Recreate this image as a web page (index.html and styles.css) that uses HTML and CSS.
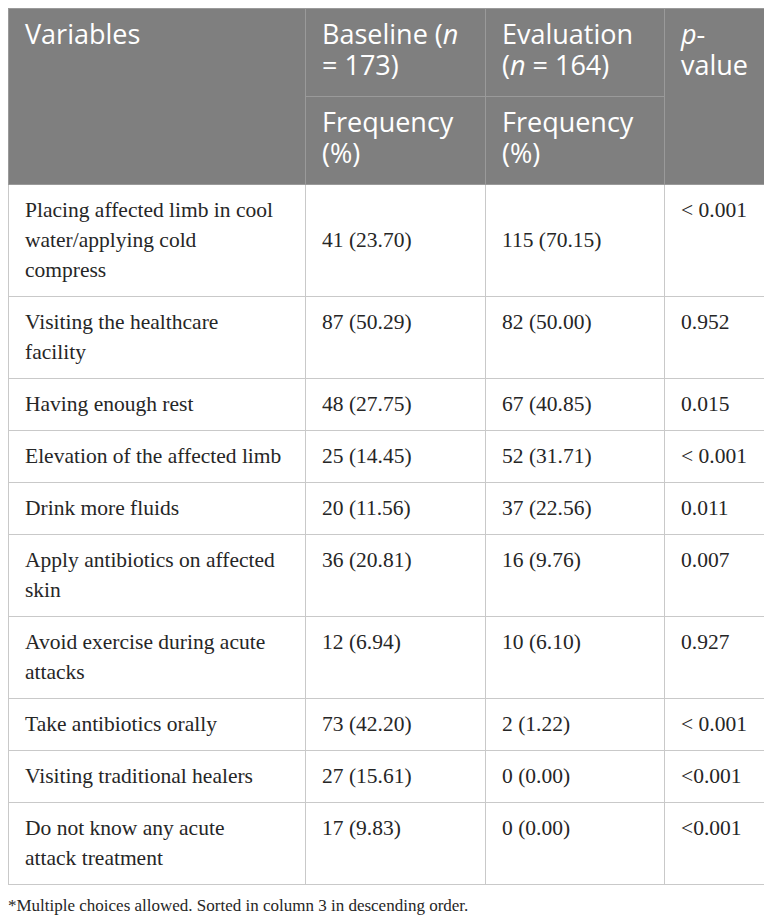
FILE: index.html
```html
<!DOCTYPE html>
<html>
<head>
<meta charset="utf-8">
<link rel="stylesheet" href="styles.css">
</head>
<body>
<table class="data">
  <colgroup>
    <col class="c1"><col class="c2"><col class="c3"><col class="c4">
  </colgroup>
  <thead>
    <tr>
      <th rowspan="2">Variables</th>
      <th>Baseline (<i>n</i> = 173)</th>
      <th>Evaluation (<i>n</i> = 164)</th>
      <th rowspan="2"><i>p</i>-value</th>
    </tr>
    <tr>
      <th>Frequency (%)</th>
      <th>Frequency (%)</th>
    </tr>
  </thead>
  <tbody>
    <tr><td>Placing affected limb in cool<br>water/applying cold<br>compress</td><td class="mid">41 (23.70)</td><td class="mid">115 (70.15)</td><td>&lt; 0.001</td></tr>
    <tr><td>Visiting the healthcare<br>facility</td><td>87 (50.29)</td><td>82 (50.00)</td><td>0.952</td></tr>
    <tr><td>Having enough rest</td><td>48 (27.75)</td><td>67 (40.85)</td><td>0.015</td></tr>
    <tr><td>Elevation of the affected limb</td><td>25 (14.45)</td><td>52 (31.71)</td><td>&lt; 0.001</td></tr>
    <tr><td>Drink more fluids</td><td>20 (11.56)</td><td>37 (22.56)</td><td>0.011</td></tr>
    <tr><td>Apply antibiotics on affected<br>skin</td><td>36 (20.81)</td><td>16 (9.76)</td><td>0.007</td></tr>
    <tr><td>Avoid exercise during acute<br>attacks</td><td>12 (6.94)</td><td>10 (6.10)</td><td>0.927</td></tr>
    <tr><td>Take antibiotics orally</td><td>73 (42.20)</td><td>2 (1.22)</td><td>&lt; 0.001</td></tr>
    <tr><td>Visiting traditional healers</td><td>27 (15.61)</td><td>0 (0.00)</td><td>&lt;0.001</td></tr>
    <tr><td>Do not know any acute<br>attack treatment</td><td>17 (9.83)</td><td>0 (0.00)</td><td>&lt;0.001</td></tr>
  </tbody>
</table>
<p class="note">*Multiple choices allowed. Sorted in column 3 in descending order.</p>
</body>
</html>
```
FILE: styles.css
```css
body {
  margin: 8px;
  background: #ffffff;
}
.data {
  width: 757px;
  table-layout: fixed;
  border-collapse: collapse;
  border: 1px solid #c9c9c9;
}
.c1 { width: 297px; }
.c2 { width: 180px; }
.c3 { width: 179px; }
.c4 { width: 101px; }
.data th {
  background: #7f7f7f;
  color: #ffffff;
  font-family: "Open Sans", "Noto Sans", sans-serif;
  font-weight: normal;
  font-size: 27px;
  line-height: 31px;
  text-align: left;
  vertical-align: top;
  padding: 9px 16px 16px 16px;
  border: 1px solid #9a9a9a;
}
.data td {
  font-family: "Liberation Serif", "Times New Roman", serif;
  font-size: 21.5px;
  line-height: 30px;
  color: #262626;
  vertical-align: top;
  padding: 10px 16px 11px 16px;
  border: 1px solid #c9c9c9;
}
.data td.mid {
  vertical-align: middle;
}
.note {
  margin: 10px 0 0 0;
  font-family: "Liberation Serif", "Times New Roman", serif;
  font-size: 17px;
  line-height: 22px;
  color: #262626;
}
```
